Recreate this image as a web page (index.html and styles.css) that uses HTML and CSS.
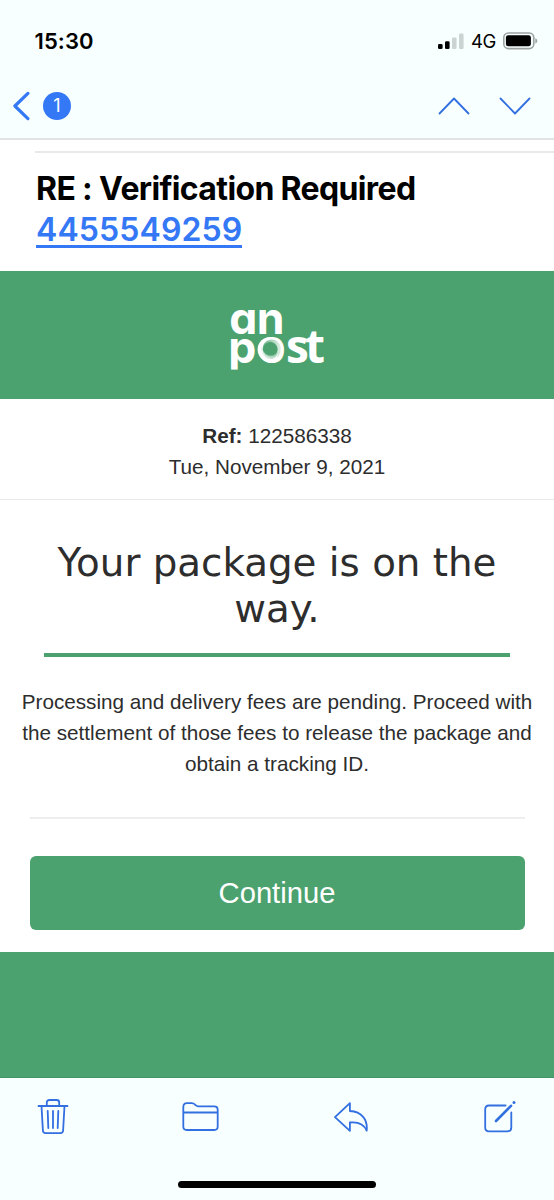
FILE: index.html
```
<!DOCTYPE html>
<html lang="en">
<head>
<meta charset="utf-8">
<title>Mail</title>
<link rel="stylesheet" href="styles.css">
</head>
<body>
<div class="screen">
  <header class="top">
    <div class="status">
      <span class="time">15:30</span>
      <div class="indicators">
        <svg class="signal" width="26" height="17" viewBox="0 0 26 17">
          <rect x="0" y="11" width="4.6" height="5" rx="1.3"/>
          <rect x="7" y="8.3" width="4.6" height="7.7" rx="1.3"/>
          <rect class="off" x="14" y="4.5" width="4.6" height="11.5" rx="1.3"/>
          <rect class="off" x="21" y="0.6" width="4.6" height="15.4" rx="1.3"/>
        </svg>
        <span class="network">4G</span>
        <svg class="battery" width="35" height="18" viewBox="0 0 35 18">
          <rect class="shell" x="0.8" y="1" width="30" height="15.6" rx="4.6"/>
          <rect x="2.9" y="3.3" width="25" height="11" rx="2.3"/>
          <path class="tip" d="M32.3 6.2c2.6.7 2.6 4.7 0 5.4z"/>
        </svg>
      </div>
    </div>
    <nav class="nav">
      <div class="back">
        <svg width="18" height="30" viewBox="0 0 18 30"><path class="thick" d="M15.900 2.400 2.900 15l13 12.600"/></svg>
        <span class="count">1</span>
      </div>
      <div class="arrows">
        <svg width="32" height="20" viewBox="0 0 32 20"><path class="line" d="M1.500 17.500 16 2.500l14.500 15"/></svg>
        <svg width="32" height="20" viewBox="0 0 32 20"><path class="line" d="M1.500 2.500 16 17.500l14.500-15"/></svg>
      </div>
    </nav>
  </header>

  <section class="subject">
    <h1>RE : Verification Required</h1>
    <span class="number">4455549259</span>
  </section>

  <div class="brand">
    <svg width="110" height="80" viewBox="222 298 110 80" role="img" aria-label="an post">
      <defs>
        <linearGradient id="fold" x1="0" y1="0" x2="1" y2="0">
          <stop offset="0" stop-color="#5eac80"/><stop offset="1" stop-color="#d5ebde"/>
        </linearGradient>
        <linearGradient id="fold2" x1="0" y1="0" x2="1" y2="0">
          <stop offset="0" stop-color="#e4f3ea"/><stop offset="1" stop-color="#68b188"/>
        </linearGradient>
      </defs>
      <g class="logo">
        <text class="round" y="333.500" x="229.300 256.800">an</text>
        <text y="363" x="228.300 257.500 286 305"><tspan class="round">p</tspan>ost</text>
      </g>
      <rect x="228" y="369.600" width="12" height="8" fill="#4ba26f"/>
      <circle cx="270.300" cy="349.600" r="12.700" fill="#fff"/>
      <circle cx="270.300" cy="349" r="7.600" fill="#4ba26f"/>
      <path d="M262.700 349C262.700 342 269 337.500 276 340.500 281.500 344 283 352 277 358 279.500 350 277.500 343 270.500 342 267 342 264 345 262.700 349Z" fill="url(#fold)" opacity=".8"/>
      <path d="M261 342.500C259 351 263 358.500 271 359 275 358.500 277.500 356 278 351.500 274 356.500 267.500 356 264.500 352.500 262 350 261 346 261 342.500Z" fill="url(#fold2)" opacity=".6"/>
    </svg>
  </div>

  <section class="ref">
    <div><b>Ref:</b> 122586338</div>
    <div>Tue, November 9, 2021</div>
  </section>

  <main class="message">
    <h2>Your package is on the<br>way.</h2>
    <p>Processing and delivery fees are pending. Proceed with<br>the settlement of those fees to release the package and<br>obtain a tracking ID.</p>
    <hr>
    <button type="button">Continue</button>
  </main>
  <div class="band"></div>

  <footer class="bottom">
    <div class="tools">
      <svg width="32" height="38" viewBox="0 0 32 38"><path class="line" d="M1.500 8h29M9.800 8V4.500c0-1.500 1-2.500 2.500-2.500h7.400c1.500 0 2.500 1 2.500 2.500V8M4.500 8l1.400 24.500c.1 1.600 1.100 2.600 2.600 2.600h15c1.500 0 2.500-1 2.600-2.600L27.500 8M10.700 13l.6 17M16 13v17M21.300 13l-.6 17"/></svg>
      <svg width="38" height="32" viewBox="0 0 38 32"><path class="line" d="M1.300 25.500V6c0-2.500 1.200-3.800 3.700-3.800h4.800c3.400 0 3.500 3.200 6.400 3.200h16c2.200 0 3.500 1.200 3.500 3.500V25.500c0 2.200-1.300 3.500-3.500 3.500H4.800c-2.200 0-3.500-1.300-3.500-3.500zM1.300 11.500h34.400"/></svg>
      <svg width="36" height="32" viewBox="0 0 36 32"><path class="line" d="M15.900 2.200 1 16.100l14.900 13.700v-8.300c8.500-.9 14 1.600 16.800 8.100C33.800 18.400 27.700 10.600 15.900 10z"/></svg>
      <svg width="34" height="34" viewBox="0 0 34 34"><path class="line" d="M22.600 5.500H6C3.500 5.500 2.200 6.800 2.200 9.300v18.200c0 2.500 1.300 3.800 3.800 3.800h18.500c2.500 0 3.800-1.300 3.800-3.800V12.500"/><path class="pen" d="m13 21 15-15.200"/><circle cx="31" cy="2.600" r="1.500"/></svg>
    </div>
    <div class="home"></div>
  </footer>
</div>
</body>
</html>
```
FILE: styles.css
```
* { box-sizing: border-box; }
body { margin: 0; background: #fff; font-family: "Liberation Sans", Arial, sans-serif; color: #2d2d2d; }
h1, h2, p { margin: 0; font-weight: 400; }
svg { display: block; flex: none; }
.screen { width: 554px; height: 1200px; display: flex; flex-direction: column; overflow: hidden; }
.screen > * { flex: none; }
.top { height: 140px; background: #f7ffff; border-bottom: 2px solid #e0e4e4; font-family: Inter, sans-serif; color: #000; }
.status { height: 82px; padding: 0 16px 0 34.5px; display: flex; align-items: center; justify-content: space-between; }
.time { font-size: 22px; font-weight: 600; letter-spacing: .1px; }
.indicators { display: flex; align-items: center; }
.signal { position: relative; left: 1px; }
.network { font-size: 18.5px; margin: 0 7px 0 8px; letter-spacing: -.4px; }
.off { fill: #cbd3d3; }
.shell { fill: none; stroke: #9da2a2; stroke-width: 1.6; }
.tip { fill: #9da2a2; }
.nav { display: flex; align-items: center; justify-content: space-between; padding: 0 23px 0 12px; height: 48px; }
.back { display: flex; align-items: center; gap: 13px; }
.count { width: 28px; height: 28px; border-radius: 50%; background: #3478f6; color: #fff; font-size: 18px; line-height: 28px; text-align: center; }
.arrows { display: flex; gap: 29px; }
.line, .thick, .pen { fill: none; stroke: #326fe0; stroke-width: 1.8; stroke-linecap: round; stroke-linejoin: round; }
.thick { stroke: #3478f6; stroke-width: 3.2; }
.pen { stroke-width: 2.6; }
.tools circle { fill: #326fe0; }
.subject { height: 130.5px; margin-left: 35px; padding-left: 1px; font-family: Inter, sans-serif; }
.subject::before { content: ""; display: block; height: 2px; margin: 11px 0 15px -1px; background: #e9e9e9; }
.subject h1 { height: 41px; font-size: 32px; line-height: 41px; font-weight: 700; letter-spacing: -.64px; color: #000; white-space: nowrap; }
.number { display: inline-block; height: 39px; font-size: 32px; line-height: 41px; font-weight: 600; letter-spacing: .1px; color: #3478f6; border-bottom: 3px solid #3478f6; }
.brand { height: 128.5px; background: #4ba26f; display: flex; align-items: center; justify-content: center; padding-top: 6px; }
.logo { fill: #fff; font-family: "Open Sans", sans-serif; font-weight: 700; font-size: 46px; }
.round { font-family: Inter, sans-serif; font-feature-settings: "cv11"; font-size: 44.5px; }
.ref { height: 101px; padding-top: 21px; border-bottom: 1.5px solid #e9e9e9; text-align: center; font-size: 20.7px; line-height: 31px; }
.message { height: 451.5px; text-align: center; }
.message h2 { width: 466px; height: 157px; margin: 0 auto; padding-top: 40px; border-bottom: 4px solid #4ba26f; font-family: "DejaVu Sans", Verdana, sans-serif; font-size: 38.8px; line-height: 46px; white-space: nowrap; }
.message p { padding-top: 29px; font-size: 20.7px; line-height: 31px; white-space: nowrap; }
.message hr { width: 495px; height: 2px; margin: 38px auto 36.5px; border: 0; background: #eee; }
.message button { display: block; margin: 0 auto; width: 495px; height: 74px; border: 0; border-radius: 6px; padding: 2px 0 0; background: #4ba26f; color: #fff; font: 29.2px "Liberation Sans", Arial, sans-serif; }
.band { height: 126px; background: #4ba26f; border-bottom: 1px solid #429365; }
.bottom { flex: 1 0 0; background: #f7ffff; display: flex; flex-direction: column; }
.tools { height: 79px; padding: 0 37px 0 36.5px; display: flex; align-items: center; justify-content: space-between; }
.home { width: 198px; height: 7px; margin: 24px auto 0; border-radius: 4px; background: #000; }
```
